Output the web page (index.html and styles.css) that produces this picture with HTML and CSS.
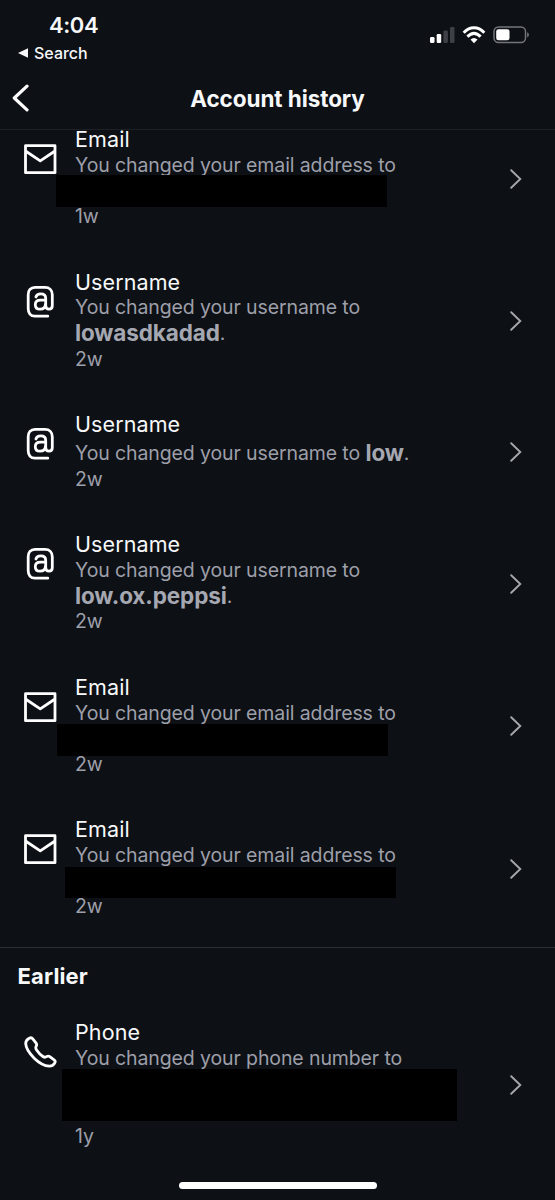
FILE: index.html
```html
<!DOCTYPE html>
<html lang="en">
<head>
<meta charset="utf-8">
<title>Account history</title>
<link rel="stylesheet" href="styles.css">
</head>
<body>
<svg class="symbols" aria-hidden="true">
  <symbol id="mail" viewBox="0 0 34 34">
    <path d="M2.500 3.700h29.500v27H2.500zM2.500 9l14.750 9.800L32 9"/>
  </symbol>
  <symbol id="at" viewBox="0 0 34 34">
    <path d="M24.800 31.200H12C7.500 31.200 5.200 28 5.200 23.500V9.700C5.200 5.400 7.500 2.400 12 2.400h10C26.500 2.400 29.300 5.400 29.300 9.700v10.800c0 4.800-6.600 4.800-6.600 0V13.400c0-3-2-4.500-4.900-4.500-2.700 0-4.300 1.100-4.900 3.100M22.500 15.200h-5c-3.400 0-5.200 1.500-5.200 4.500 0 2.900 1.800 4.500 4.600 4.500 3.500 0 5.600-2.100 5.600-5.500"/>
  </symbol>
  <symbol id="phone" viewBox="0 0 34 34">
    <path d="M6.200 3.300c1.200-.8 2.700-.6 3.600.5l3.300 4.300c.8 1.100.8 2 .1 3.100-.8 1.300-.5 2.400.4 3.800 1.700 2.600 3.700 4.700 6.300 6.500 1.300.9 2.400 1 3.600.2 1.200-.8 2.200-.8 3.300 0l4.300 3.100c1.100.8 1.300 2.200.5 3.400-1.200 1.900-3.100 3-5.400 2.900-5.200-.2-10.500-3.500-15-7.900C6.700 18.700 3 13.600 2.700 8.700c-.1-2.300 1.200-4.100 3.500-5.400z"/>
  </symbol>
  <symbol id="chevron" viewBox="0 0 12 20"><path d="M1.200 1.200L10.300 10l-9.100 8.800"/></symbol>
</svg>
<div class="screen">
  <div class="status">
    <div class="status-left">
      <div class="time">4:04</div>
      <div class="return"><svg width="10" height="10" viewBox="0 0 10 10"><path d="M10 .3v9.400L0 5z" fill="currentColor"/></svg><span>Search</span></div>
    </div>
    <svg class="status-icons" width="100" height="20" viewBox="0 0 100 20">
      <g fill="#fff"><rect x="0" y="12" width="4.500" height="6" rx="1.300"/><rect x="6.700" y="9" width="4.500" height="9" rx="1.300"/></g>
      <g fill="#3d4045"><rect x="13.400" y="5.500" width="4.500" height="12.500" rx="1.300"/><rect x="20" y="2" width="4.500" height="16" rx="1.300"/></g>
      <g fill="none" stroke="#fff" stroke-width="3"><path d="M33.700 7.700C40 1.200 48 1.200 54.300 7.700"/><path d="M37.400 11.600c4.200-4.200 9-4.200 13.200 0"/></g>
      <path d="M40.500 14.600c2.300-2 4.700-2 7 0L44 18.200z" fill="#fff"/>
      <rect x="64" y="2" width="31.500" height="15.500" rx="4.500" fill="none" stroke="#73757a" stroke-width="1.500"/>
      <rect x="66.200" y="4.200" width="13.300" height="11.100" rx="2.300" fill="#fff"/>
      <path d="M97.200 7.200c2.200.8 2.200 4.300 0 5.100z" fill="#73757a"/>
    </svg>
  </div>
  <header class="header">
    <svg class="back" width="17" height="28" viewBox="0 0 17 28"><path d="M15 2.200L2.300 14 15 25.800"/></svg>
    <h1>Account history</h1>
  </header>
  <main>
    <section class="list recent">
      <article class="row">
        <svg class="icon"><use href="#mail"/></svg>
        <div class="content"><h2>Email</h2><p>You changed your email address to</p><span class="redacted r1"></span><time>1w</time></div>
        <svg class="chevron"><use href="#chevron"/></svg>
      </article>
      <article class="row">
        <svg class="icon"><use href="#at"/></svg>
        <div class="content"><h2>Username</h2><p>You changed your username to<br><b>lowasdkadad</b>.</p><time>2w</time></div>
        <svg class="chevron"><use href="#chevron"/></svg>
      </article>
      <article class="row">
        <svg class="icon"><use href="#at"/></svg>
        <div class="content"><h2>Username</h2><p class="single">You changed your username to <b>low</b>.</p><time>2w</time></div>
        <svg class="chevron"><use href="#chevron"/></svg>
      </article>
      <article class="row">
        <svg class="icon"><use href="#at"/></svg>
        <div class="content"><h2>Username</h2><p>You changed your username to<br><b>low.ox.peppsi</b>.</p><time>2w</time></div>
        <svg class="chevron"><use href="#chevron"/></svg>
      </article>
      <article class="row">
        <svg class="icon"><use href="#mail"/></svg>
        <div class="content"><h2>Email</h2><p>You changed your email address to</p><span class="redacted r2"></span><time>2w</time></div>
        <svg class="chevron"><use href="#chevron"/></svg>
      </article>
      <article class="row">
        <svg class="icon"><use href="#mail"/></svg>
        <div class="content"><h2>Email</h2><p>You changed your email address to</p><span class="redacted r3"></span><time>2w</time></div>
        <svg class="chevron"><use href="#chevron"/></svg>
      </article>
    </section>
    <section class="list earlier">
      <h3>Earlier</h3>
      <article class="row">
        <svg class="icon"><use href="#phone"/></svg>
        <div class="content"><h2>Phone</h2><p>You changed your phone number to</p><span class="redacted r4"></span><time>1y</time></div>
        <svg class="chevron"><use href="#chevron"/></svg>
      </article>
    </section>
  </main>
  <div class="home"></div>
</div>
</body>
</html>
```
FILE: styles.css
```css
* { box-sizing: border-box; }
body {
  margin: 0;
  background: #0d1015;
  color: #f7f8fa;
  font-family: Inter, "Liberation Sans", sans-serif;
}
h1, h2, h3, p { margin: 0; }
.symbols { display: none; }
.screen {
  width: 555px;
  height: 1200px;
  overflow: hidden;
  display: flex;
  flex-direction: column;
}
.status {
  height: 68px;
  flex: none;
  display: flex;
  justify-content: space-between;
  padding: 12px 25px 0 18px;
}
.time { padding-left: 31px; font-size: 22px; line-height: 27px; font-weight: 600; letter-spacing: -.4px; }
.return { display: flex; align-items: center; gap: 6px; font-size: 16px; line-height: 20px; margin-top: 4px; font-weight: 450; }
.status-icons { margin-top: 13px; }
.header {
  height: 61.500px;
  flex: none;
  border-bottom: 1px solid #1d2025;
  display: grid;
  grid-template-columns: 60px 1fr 60px;
  align-items: center;
}
.header h1 { font-size: 22.500px; font-weight: 650; letter-spacing: -.08px; text-align: center; line-height: 28px; padding-top: 1px; }
.back { margin-left: 12px; fill: none; stroke: #fff; stroke-width: 3.200; stroke-linecap: round; stroke-linejoin: round; }
.recent { margin-top: -22.300px; }
.row {
  display: grid;
  grid-template-columns: 34px 1fr 12px;
  column-gap: 18.500px;
  padding: 20px 33.500px 20px 22.500px;
}
.icon { width: 34px; height: 34px; margin-top: 15px; fill: none; stroke: #fff; stroke-width: 2.800; stroke-linejoin: round; stroke-linecap: round; }
.chevron { width: 12px; height: 20px; align-self: center; fill: none; stroke: #a5a7ad; stroke-width: 1.900; stroke-linecap: round; }
.content { display: flex; flex-direction: column; line-height: 25.650px; }
.content h2 { font-size: 21.500px; font-weight: 400; letter-spacing: .1px; }
.content p, .content time { font-size: 19.500px; letter-spacing: -.11px; color: #9d9fa9; white-space: nowrap; }
.content b { font-size: 22.500px; line-height: 1; font-weight: 700; color: #a5a7b1; position: relative; top: 1px; }
.content .single { line-height: 28.500px; padding-top: 1px; margin-bottom: -1px; }
.redacted { position: relative; height: 25.650px; }
.redacted::before { content: ""; position: absolute; background: #000; }
.r1::before { left: -19.500px; top: -4px; width: 331px; height: 32px; }
.r2::before { left: -18.500px; top: -2.500px; width: 331px; height: 32px; }
.r3::before { left: -10px; top: -2px; width: 331px; height: 31px; }
.r4 { height: 52.300px; }
.r4::before { left: -13px; top: -2px; width: 395px; height: 52px; }
.earlier { border-top: 1px solid #2a2d32; margin-top: 6.800px; }
.earlier h3 { font-size: 22px; line-height: 28px; font-weight: 700; letter-spacing: .15px; padding: 14px 18px 10px 17.500px; }
.home { width: 198px; height: 7px; border-radius: 4px; background: #fff; margin: auto auto 11px; }
```
